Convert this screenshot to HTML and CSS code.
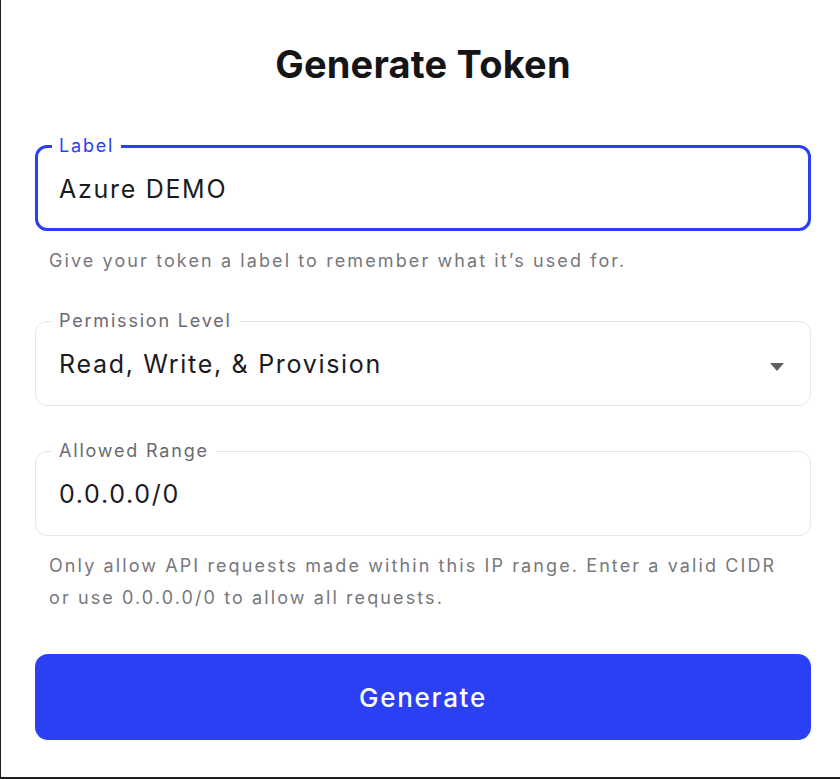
FILE: index.html
```html
<!DOCTYPE html>
<html lang="en">
<head>
  <meta charset="UTF-8">
  <title>Generate Token</title>
  <link rel="stylesheet" href="styles.css">
</head>
<body>
  <div class="frame">
    <h2>Generate Token</h2>

    <fieldset class="field focus">
      <legend>Label</legend>
      <input type="text" id="label" value="Azure DEMO">
    </fieldset>
    <p class="hint">Give your token a label to remember what it’s used for.</p>

    <fieldset class="field select">
      <legend>Permission Level</legend>
      <div class="value">Read, Write, &amp; Provision</div>
      <svg class="caret" width="16" height="8" viewBox="0 0 16 8"><path d="M1 0h14l-7 8z" fill="#5f5f63"/></svg>
    </fieldset>

    <fieldset class="field range">
      <legend>Allowed Range</legend>
      <input type="text" id="range" value="0.0.0.0/0">
    </fieldset>
    <p class="hint">Only allow API requests made within this IP range. Enter a valid CIDR or use 0.0.0.0/0 to allow all requests.</p>

    <button class="generate">Generate</button>
  </div>
</body>
</html>
```

FILE: styles.css
```css
body { margin: 0; background: #fff; font-family: Inter, "Noto Sans", sans-serif; color: #1b1b1f; }
.frame { height: 779px; box-sizing: border-box; border-left: 1px solid #1e1e1e; border-bottom: 2px solid #1e1e1e; padding: 0 29px 0 34px; }
h2 { margin: 0 0 52px; padding: 44px 0 0; text-align: center; font-size: 38px; line-height: 40px; font-weight: 700; letter-spacing: 0.2px; color: #151518; }
.field { position: relative; margin: 0; border: 1px solid #e4e4ea; border-radius: 12px; padding: 0 24px 8px 23px; }
.field legend { margin-left: -7px; padding: 0 7px; font-size: 18px; line-height: 20px; letter-spacing: 1.8px; color: #6a6a70; }
.field.focus { border: 3px solid #2b40f5; padding-left: 21px; padding-bottom: 6px; }
.field.focus legend { color: #2b40f5; }
.field input, .field .value { display: block; width: 100%; height: 66px; box-sizing: border-box; border: 0; padding: 0; margin: 0; outline: none; font-family: inherit; font-size: 25px; letter-spacing: 1.7px; color: #1b1b1f; background: none; line-height: 66px; }
.caret { position: absolute; right: 25px; top: 32px; }
.hint { margin: 0; padding: 14px 14px 0; font-size: 18px; line-height: 32px; letter-spacing: 2.1px; color: #77777d; }
.select { margin-top: 34px; }
.range { margin-top: 35px; }
.generate { display: block; width: 100%; height: 86px; margin-top: 40px; border: 0; border-radius: 13px; background: #2b40f5; color: #fff; font-family: inherit; font-size: 26px; font-weight: 500; letter-spacing: 1.7px; }
```
